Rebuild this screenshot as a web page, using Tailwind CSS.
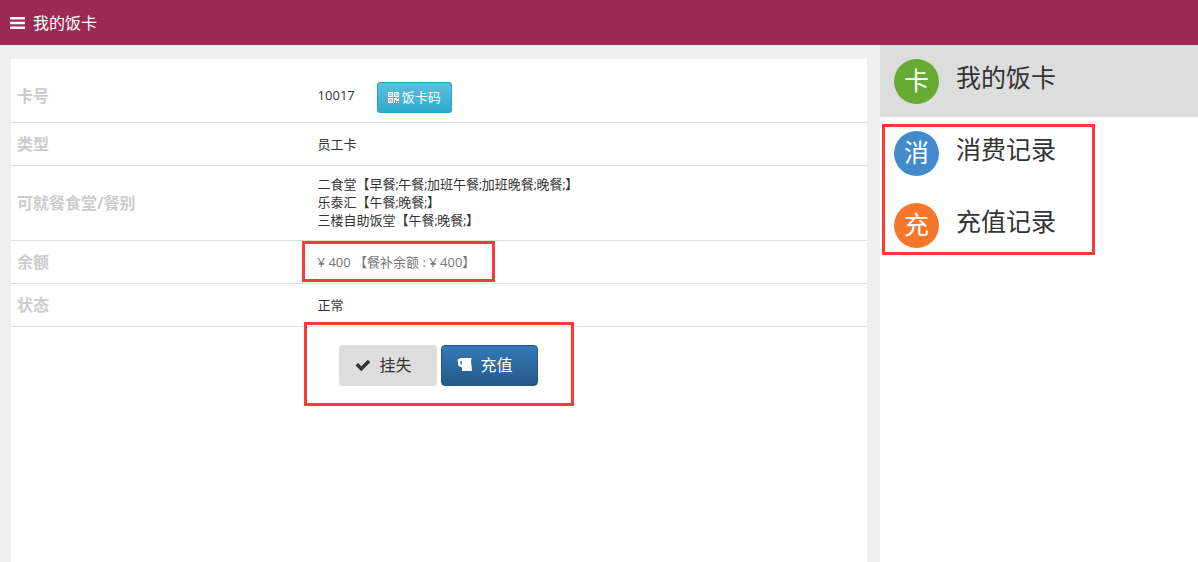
<!DOCTYPE html>
<html lang="zh-CN">
<head>
  <meta charset="UTF-8">
  <meta name="viewport" content="width=device-width, initial-scale=1.0">
  <title>我的饭卡</title>
  <script src="https://cdn.jsdelivr.net/npm/@tailwindcss/browser@4"></script>
</head>
<body class="flex min-h-screen flex-col bg-[#efefef] font-['Open_Sans','Noto_Sans_CJK_SC',sans-serif] text-[13px] leading-[18px] text-[#333]">
  <header class="flex h-[45px] items-center gap-2 bg-[#9c2952] px-[10px] text-white">
    <button type="button" aria-label="菜单">
      <svg class="block h-3 w-[15px]" viewBox="0 0 15 12" fill="currentColor"><rect width="15" height="2.600" rx=".4"/><rect y="4.700" width="15" height="2.600" rx=".4"/><rect y="9.400" width="15" height="2.600" rx=".4"/></svg>
    </button>
    <h1 class="text-base">我的饭卡</h1>
  </header>

  <div class="flex flex-1">
    <main class="flex flex-1 pt-[14px] pr-[13px] pl-[11px]">
      <div class="flex-1 bg-white">
        <table class="w-full table-fixed border-collapse">
          <tbody>
            <tr class="h-[63px] border-b border-[#ddd]">
              <th class="w-[35%] px-[6px] pt-3 text-left text-base leading-6 font-bold text-[#ccc]">卡号</th>
              <td class="px-[7px] pt-[14px]">
                <div class="flex items-center gap-[22px]">
                  <span class="pb-1">10017</span>
                  <button type="button" class="flex h-[31px] items-center gap-[3px] rounded-[3px] border border-[#28a1c5] bg-linear-to-b from-[#5bc0de] to-[#2aabd2] px-[10px] text-white">
                    <svg class="size-[11px]" viewBox="0 0 11 11" fill="currentColor"><path fill-rule="evenodd" d="M0 0h5v5H0zM1.300 1.300v2.400h2.400V1.300zM6 0h5v5H6zM7.300 1.300v2.400h2.400V1.300zM0 6h5v5H0zM1.300 7.300v2.400h2.400V7.300zM2 2h1v1H2zM8 2h1v1H8zM2 8h1v1H2zM6 6h3v1h1V6h1v3H8V8H7v3H6zM8 10h1v1H8zM10 10h1v1h-1z"/></svg>
                    <span>饭卡码</span>
                  </button>
                </div>
              </td>
            </tr>
            <tr class="h-[43px] border-b border-[#ddd]">
              <th class="px-[6px] text-left text-base leading-6 font-bold text-[#ccc]">类型</th>
              <td class="px-[7px]">员工卡</td>
            </tr>
            <tr class="h-[75px] border-b border-[#ddd]">
              <th class="px-[6px] text-left text-base leading-6 font-bold text-[#ccc]">可就餐食堂/餐别</th>
              <td class="px-[7px] font-[Roboto,'Noto_Sans_CJK_SC',sans-serif]">
                <p>二食堂【早餐;午餐;加班午餐;加班晚餐;晚餐;】</p>
                <p>乐泰汇【午餐;晚餐;】</p>
                <p>三楼自助饭堂【午餐;晚餐;】</p>
              </td>
            </tr>
            <tr class="h-[43px] border-b border-[#ddd]">
              <th class="px-[6px] text-left text-base leading-6 font-bold text-[#ccc]">余额</th>
              <td class="relative px-[7px] text-[#777]">
                ¥ 400 【餐补余额 : ¥ 400】
                <div class="pointer-events-none absolute top-0 -left-[9px] h-[41px] w-[193px] border-3 border-[#fc3838]"></div>
              </td>
            </tr>
            <tr class="h-[43px] border-b border-[#ddd]">
              <th class="px-[6px] text-left text-base leading-6 font-bold text-[#ccc]">状态</th>
              <td class="px-[7px]">正常</td>
            </tr>
          </tbody>
        </table>

        <div class="relative ml-[35%] flex gap-1 px-7 pt-[18px] text-base">
          <button type="button" class="flex h-[41px] items-center gap-[9px] rounded bg-[#ddd] pr-[25px] pl-4">
            <svg class="h-[14px] w-4" viewBox="0 0 16 14" fill="currentColor"><path d="M.5 7.500 3 5 6.300 8.300 12.800 1.800 15.300 4.300 6.300 13.300z"/></svg>
            <span>挂失</span>
          </button>
          <button type="button" class="flex h-[41px] items-center gap-2 rounded border border-[#245580] bg-linear-to-b from-[#337ab7] to-[#265a88] pr-6 pl-[15px] text-white">
            <svg class="h-[14px] w-4" viewBox="0 0 16 14" fill="currentColor"><path fill-rule="evenodd" d="M4 0h10.500l-.5 4 .8 5v4H5V9.500L1.500 8 .5 1.500zM3.500 3v3.200l1.300.6V3z"/></svg>
            <span>充值</span>
          </button>
          <div class="pointer-events-none absolute -top-[5px] -left-[7px] h-21 w-[270px] border-3 border-[#fc3838]"></div>
        </div>
      </div>
    </main>

    <aside class="w-[318px] bg-white text-[25px]">
      <nav class="relative">
        <a href="#" class="flex h-18 gap-[17px] bg-[#ddd] px-[14px] pt-[14px]">
          <span class="flex size-[45px] items-center justify-center rounded-full bg-[#65ab34] pb-1 text-white">卡</span>
          <span class="leading-9">我的饭卡</span>
        </a>
        <a href="#" class="flex h-18 gap-[17px] px-[14px] pt-[14px]">
          <span class="flex size-[45px] items-center justify-center rounded-full bg-[#428bca] pb-1 text-white">消</span>
          <span class="leading-9">消费记录</span>
        </a>
        <a href="#" class="flex h-18 gap-[17px] px-[14px] pt-[14px]">
          <span class="flex size-[45px] items-center justify-center rounded-full bg-[#f4772b] pb-1 text-white">充</span>
          <span class="leading-9">充值记录</span>
        </a>
        <div class="pointer-events-none absolute top-[79px] left-[2px] h-[131px] w-[213px] border-3 border-[#fc3838]"></div>
      </nav>
    </aside>
  </div>
</body>
</html>
